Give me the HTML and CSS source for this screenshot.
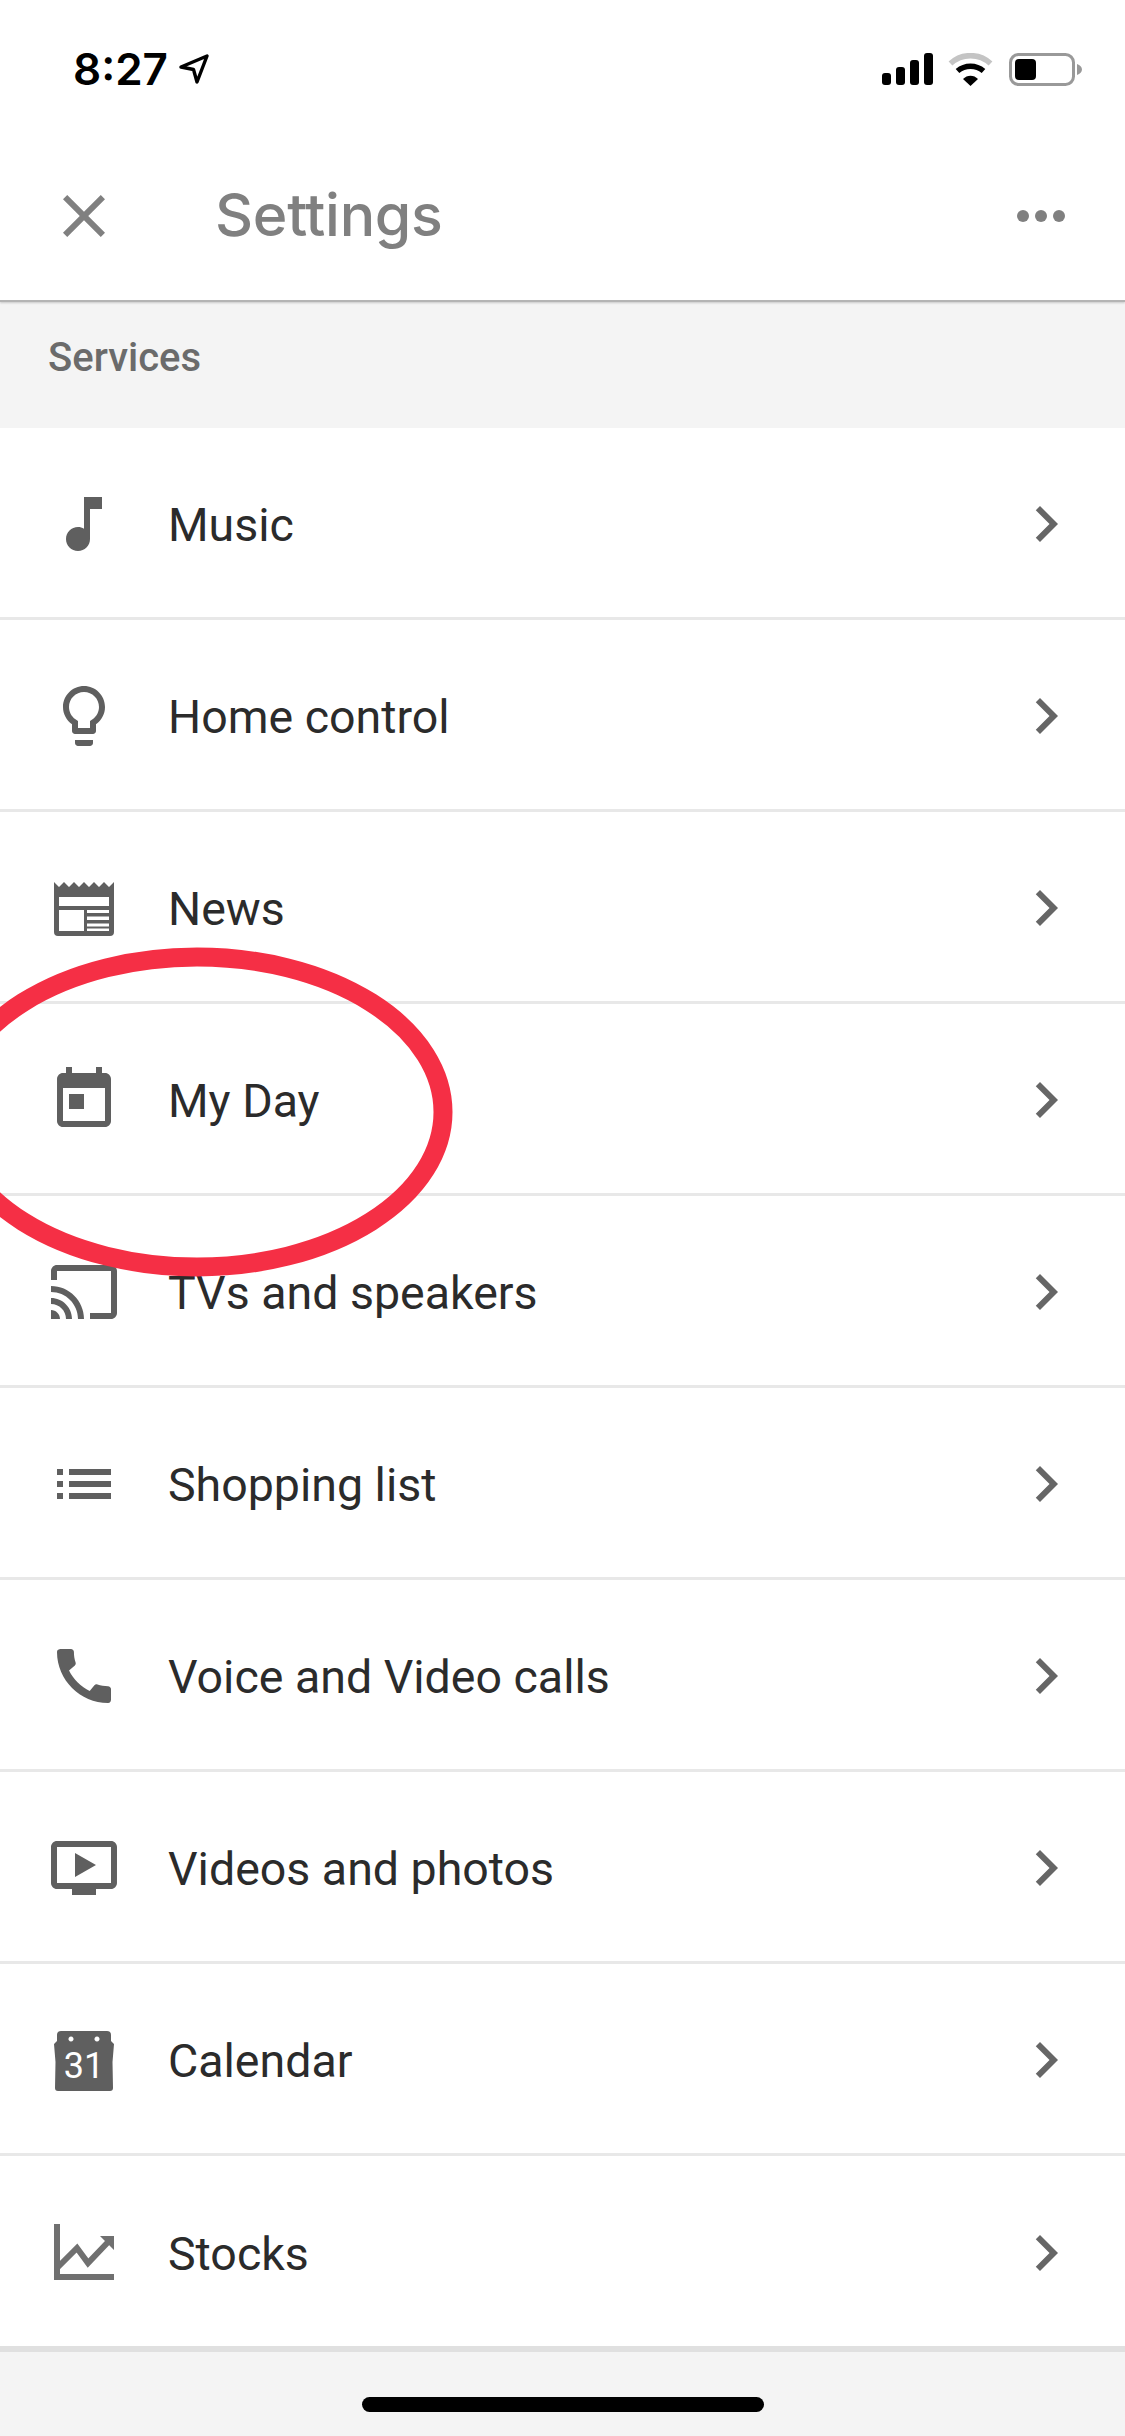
FILE: index.html
```html
<!DOCTYPE html>
<html lang="en">
<head>
    <meta charset="UTF-8">
    <meta name="viewport" content="width=device-width, initial-scale=1.0">
    <title>Settings</title>
    <link rel="stylesheet" href="styles.css">
</head>
<body>
    <div class="page">
        <header class="top">
            <div class="status">
                <div class="status-left">
                    <span class="time">8:27</span>
                    <svg class="loc" viewBox="0 0 30 30"><path d="M2 13L28 2L18 28L14.500 15.500Z" fill="none" stroke="#000" stroke-width="3.400" stroke-linejoin="round"/></svg>
                </div>
                <div class="status-right">
                    <svg class="signal" viewBox="0 0 51 32"><rect x="0" y="20" width="9" height="12" rx="3"/><rect x="14" y="14" width="9" height="18" rx="3"/><rect x="28" y="7" width="9" height="25" rx="3"/><rect x="42" y="0" width="9" height="32" rx="3"/></svg>
                    <svg class="wifi" viewBox="0 0 45 33">
                        <path d="M2.500 10.500C13.500 0 31.500 0 42.500 10.500" fill="none" stroke="#c4c4c4" stroke-width="5.500"/>
                        <path d="M9.500 18C17 11.500 28 11.500 35.500 18" fill="none" stroke="#000" stroke-width="5.500"/>
                        <path d="M15 26L22.500 33L30 26C26 21.500 19 21.500 15 26Z"/>
                    </svg>
                    <svg class="battery" viewBox="0 0 73 33">
                        <rect x="1.500" y="1.500" width="63" height="30" rx="8" fill="none" stroke="#999" stroke-width="3"/>
                        <rect x="6" y="6" width="21" height="21" rx="4"/>
                        <path d="M68 11C71 12 73 14 73 16.500C73 19 71 21 68 22Z" fill="#999"/>
                    </svg>
                </div>
            </div>
            <nav class="nav">
                <svg class="icon nav-icon" viewBox="0 0 24 24"><path d="M19 6.410L17.590 5 12 10.590 6.410 5 5 6.410 10.590 12 5 17.590 6.410 19 12 13.410 17.590 19 19 17.590 13.410 12z"/></svg>
                <h1 class="title">Settings</h1>
                <div class="dots"><span></span><span></span><span></span></div>
            </nav>
        </header>

        <div class="section">Services</div>

        <ul class="list">
            <li class="row">
                <svg class="icon" viewBox="0 0 24 24"><path d="M12 3v10.550c-.59-.34-1.270-.55-2-.55-2.210 0-4 1.790-4 4s1.790 4 4 4 4-1.790 4-4V7h4V3h-6z"/></svg>
                <span class="label">Music</span>
                <svg class="chev" viewBox="0 0 24 24"><path d="M10 6L8.590 7.410 13.170 12l-4.580 4.590L10 18l6-6z"/></svg>
            </li>
            <li class="row">
                <svg class="icon" viewBox="0 0 24 24"><path d="M9 21c0 .55.45 1 1 1h4c.55 0 1-.45 1-1v-1H9v1zm3-19C8.140 2 5 5.140 5 9c0 2.380 1.190 4.470 3 5.740V17c0 .55.45 1 1 1h6c.55 0 1-.45 1-1v-2.260c1.810-1.270 3-3.360 3-5.740 0-3.860-3.140-7-7-7zm2.850 11.100l-.85.6V16h-4v-2.300l-.85-.6C7.800 12.160 7 10.630 7 9c0-2.760 2.240-5 5-5s5 2.240 5 5c0 1.630-.8 3.160-2.150 4.100z"/></svg>
                <span class="label">Home control</span>
                <svg class="chev" viewBox="0 0 24 24"><path d="M10 6L8.590 7.410 13.170 12l-4.580 4.590L10 18l6-6z"/></svg>
            </li>
            <li class="row">
                <svg class="icon" viewBox="0 0 72 72"><path fill-rule="evenodd" d="M6 10L11 15L16 10L21 15L26 10L31 15L36 10L41 15L46 10L51 15L56 10L61 15L66 10V60Q66 64 62 64H10Q6 64 6 60ZM11 25V34H61V25ZM11 38V59H36V38ZM39 38V41H61V38ZM39 44.500V48H61V44.500ZM39 51.500V54.500H61V51.500ZM39 56.500V59H61V56.500Z"/></svg>
                <span class="label">News</span>
                <svg class="chev" viewBox="0 0 24 24"><path d="M10 6L8.590 7.410 13.170 12l-4.580 4.590L10 18l6-6z"/></svg>
            </li>
            <li class="row">
                <svg class="icon" viewBox="0 0 24 24"><path d="M19 3h-1V1h-2v2H8V1H6v2H5c-1.110 0-1.990.9-1.990 2L3 19c0 1.100.89 2 2 2h14c1.100 0 2-.9 2-2V5c0-1.100-.9-2-2-2zm0 16H5V8h14v11zM7 10h5v5H7z"/></svg>
                <span class="label">My Day</span>
                <svg class="chev" viewBox="0 0 24 24"><path d="M10 6L8.590 7.410 13.170 12l-4.580 4.590L10 18l6-6z"/></svg>
            </li>
            <li class="row">
                <svg class="icon" viewBox="0 0 24 24"><path d="M21 3H3c-1.100 0-2 .9-2 2v3h2V5h18v14h-7v2h7c1.100 0 2-.9 2-2V5c0-1.100-.9-2-2-2zM1 18v3h3c0-1.660-1.340-3-3-3zm0-4v2c2.760 0 5 2.240 5 5h2c0-3.870-3.130-7-7-7zm0-4v2c4.970 0 9 4.030 9 9h2c0-6.080-4.930-11-11-11z"/></svg>
                <span class="label">TVs and speakers</span>
                <svg class="chev" viewBox="0 0 24 24"><path d="M10 6L8.590 7.410 13.170 12l-4.580 4.590L10 18l6-6z"/></svg>
            </li>
            <li class="row">
                <svg class="icon" viewBox="0 0 24 24"><path d="M3 13h2v-2H3v2zm0 4h2v-2H3v2zm0-8h2V7H3v2zm4 4h14v-2H7v2zm0 4h14v-2H7v2zM7 7v2h14V7H7z"/></svg>
                <span class="label">Shopping list</span>
                <svg class="chev" viewBox="0 0 24 24"><path d="M10 6L8.590 7.410 13.170 12l-4.580 4.590L10 18l6-6z"/></svg>
            </li>
            <li class="row">
                <svg class="icon" viewBox="0 0 24 24"><path d="M20.010 15.380c-1.230 0-2.420-.2-3.530-.56-.35-.12-.74-.03-1.010.24l-1.570 1.970c-2.830-1.350-5.480-3.900-6.890-6.830l1.950-1.660c.27-.28.35-.67.24-1.020-.37-1.110-.56-2.300-.56-3.530 0-.54-.45-.99-.99-.99H4.190C3.650 3 3 3.240 3 3.990 3 13.280 10.730 21 20.010 21c.71 0 .99-.63.99-1.180v-3.450c0-.54-.45-.99-.99-.99z"/></svg>
                <span class="label">Voice and Video calls</span>
                <svg class="chev" viewBox="0 0 24 24"><path d="M10 6L8.590 7.410 13.170 12l-4.580 4.590L10 18l6-6z"/></svg>
            </li>
            <li class="row">
                <svg class="icon" viewBox="0 0 24 24"><path d="M21 3H3c-1.110 0-2 .89-2 2v12c0 1.100.89 2 2 2h5v2h8v-2h5c1.100 0 1.990-.9 1.990-2L23 5c0-1.110-.9-2-2-2zm0 14H3V5h18v12zM16 11l-7 4V7z"/></svg>
                <span class="label">Videos and photos</span>
                <svg class="chev" viewBox="0 0 24 24"><path d="M10 6L8.590 7.410 13.170 12l-4.580 4.590L10 18l6-6z"/></svg>
            </li>
            <li class="row">
                <svg class="icon" viewBox="0 0 72 72">
                    <path fill-rule="evenodd" d="M13 7H59Q63 7 63 11V17L66 20L64.500 38L65 64Q65 67 62 67H10Q7 67 7 64L7.500 38L6 20L9 17V11Q9 7 13 7ZM23 12.500a2.500 2.500 0 1 0 .01 0ZM49 12.500a2.500 2.500 0 1 0 .01 0Z"/>
                    <text class="cal-num" x="36" y="54" text-anchor="middle">31</text>
                </svg>
                <span class="label">Calendar</span>
                <svg class="chev" viewBox="0 0 24 24"><path d="M10 6L8.590 7.410 13.170 12l-4.580 4.590L10 18l6-6z"/></svg>
            </li>
            <li class="row row-last">
                <svg class="icon icon-soft" viewBox="0 0 72 72">
                    <path d="M6 7H12V57H66V63H6Z"/>
                    <path d="M10 50L29 31L40 46L62 23" fill="none" stroke-width="6"/>
                    <path d="M52 19H66V33L61 28V24H57Z"/>
                </svg>
                <span class="label">Stocks</span>
                <svg class="chev" viewBox="0 0 24 24"><path d="M10 6L8.590 7.410 13.170 12l-4.580 4.590L10 18l6-6z"/></svg>
            </li>
        </ul>

        <footer class="bottom"><div class="home-bar"></div></footer>

        <svg class="ring" viewBox="0 0 480 360"><ellipse cx="197" cy="182" rx="246" ry="155"/></svg>
    </div>
</body>
</html>
```

FILE: styles.css
```css
* {
    box-sizing: border-box;
}
body {
    margin: 0;
    background-color: #fff;
    font-family: Roboto, "Liberation Sans", sans-serif;
}
.page {
    position: relative;
    width: 1125px;
    height: 2436px;
    overflow: hidden;
    display: flex;
    flex-direction: column;
}
.top {
    position: relative;
    height: 302px;
    background-color: #fff;
    border-bottom: 2px solid #b4b4b4;
    box-shadow: 0 1px 2px rgba(0, 0, 0, 0.18);
}
.status {
    height: 132px;
    padding: 6px 43px 0 73px;
    display: flex;
    justify-content: space-between;
    align-items: center;
}
.status-left {
    display: flex;
    align-items: center;
    gap: 11px;
}
.time {
    font-family: Inter, sans-serif;
    font-size: 44px;
    font-weight: 600;
    color: #000;
    line-height: 1;
}
.loc {
    width: 30px;
    height: 30px;
}
.status-right {
    display: flex;
    align-items: center;
}
.signal {
    width: 51px;
    height: 32px;
    margin-right: 15px;
}
.wifi {
    width: 45px;
    height: 33px;
    margin-right: 16px;
}
.battery {
    width: 73px;
    height: 33px;
}
.nav {
    height: 168px;
    padding: 0 60px 0 48px;
    display: flex;
    align-items: center;
}
.icon {
    width: 72px;
    height: 72px;
    flex-shrink: 0;
    fill: #5f5f5f;
}
.icon-soft {
    fill: #707070;
    stroke: #707070;
    stroke-width: 0;
}
.nav-icon {
    fill: #808080;
}
.title {
    margin: 0 0 3px 95px;
    font-family: Inter, sans-serif;
    font-size: 59px;
    font-weight: 500;
    letter-spacing: -0.3px;
    color: #808080;
}
.dots {
    margin-left: auto;
    display: flex;
    gap: 6px;
}
.dots span {
    width: 12px;
    height: 12px;
    border-radius: 50%;
    background-color: #808080;
}
.section {
    height: 126px;
    padding: 0 0 15px 48px;
    display: flex;
    align-items: center;
    background-color: #f4f4f4;
    font-size: 40px;
    font-weight: 500;
    color: #6b6b6b;
}
.list {
    margin: 0;
    padding: 0;
    list-style: none;
}
.row {
    height: 192px;
    padding: 3px 43px 0 48px;
    display: flex;
    align-items: center;
    border-bottom: 3px solid #e8e8e8;
    background-color: #fff;
}
.row-last {
    height: 196px;
    padding-top: 4px;
    border-bottom: 6px solid #e0e0e0;
}
.label {
    margin-left: 48px;
    padding-top: 2px;
    font-size: 46.5px;
    color: #2b2b2b;
}
.chev {
    width: 72px;
    height: 72px;
    margin-left: auto;
    fill: #666;
}
.cal-num {
    font-family: Roboto, sans-serif;
    font-size: 36px;
    fill: #fff;
}
.bottom {
    flex: 1;
    display: flex;
    justify-content: center;
    padding-top: 45px;
    background-color: #f4f4f4;
}
.home-bar {
    width: 402px;
    height: 15px;
    border-radius: 8px;
    background-color: #000;
}
.ring {
    position: absolute;
    left: 0;
    top: 930px;
    width: 480px;
    height: 360px;
}
.ring ellipse {
    fill: none;
    stroke: #f52f45;
    stroke-width: 19;
}
```
